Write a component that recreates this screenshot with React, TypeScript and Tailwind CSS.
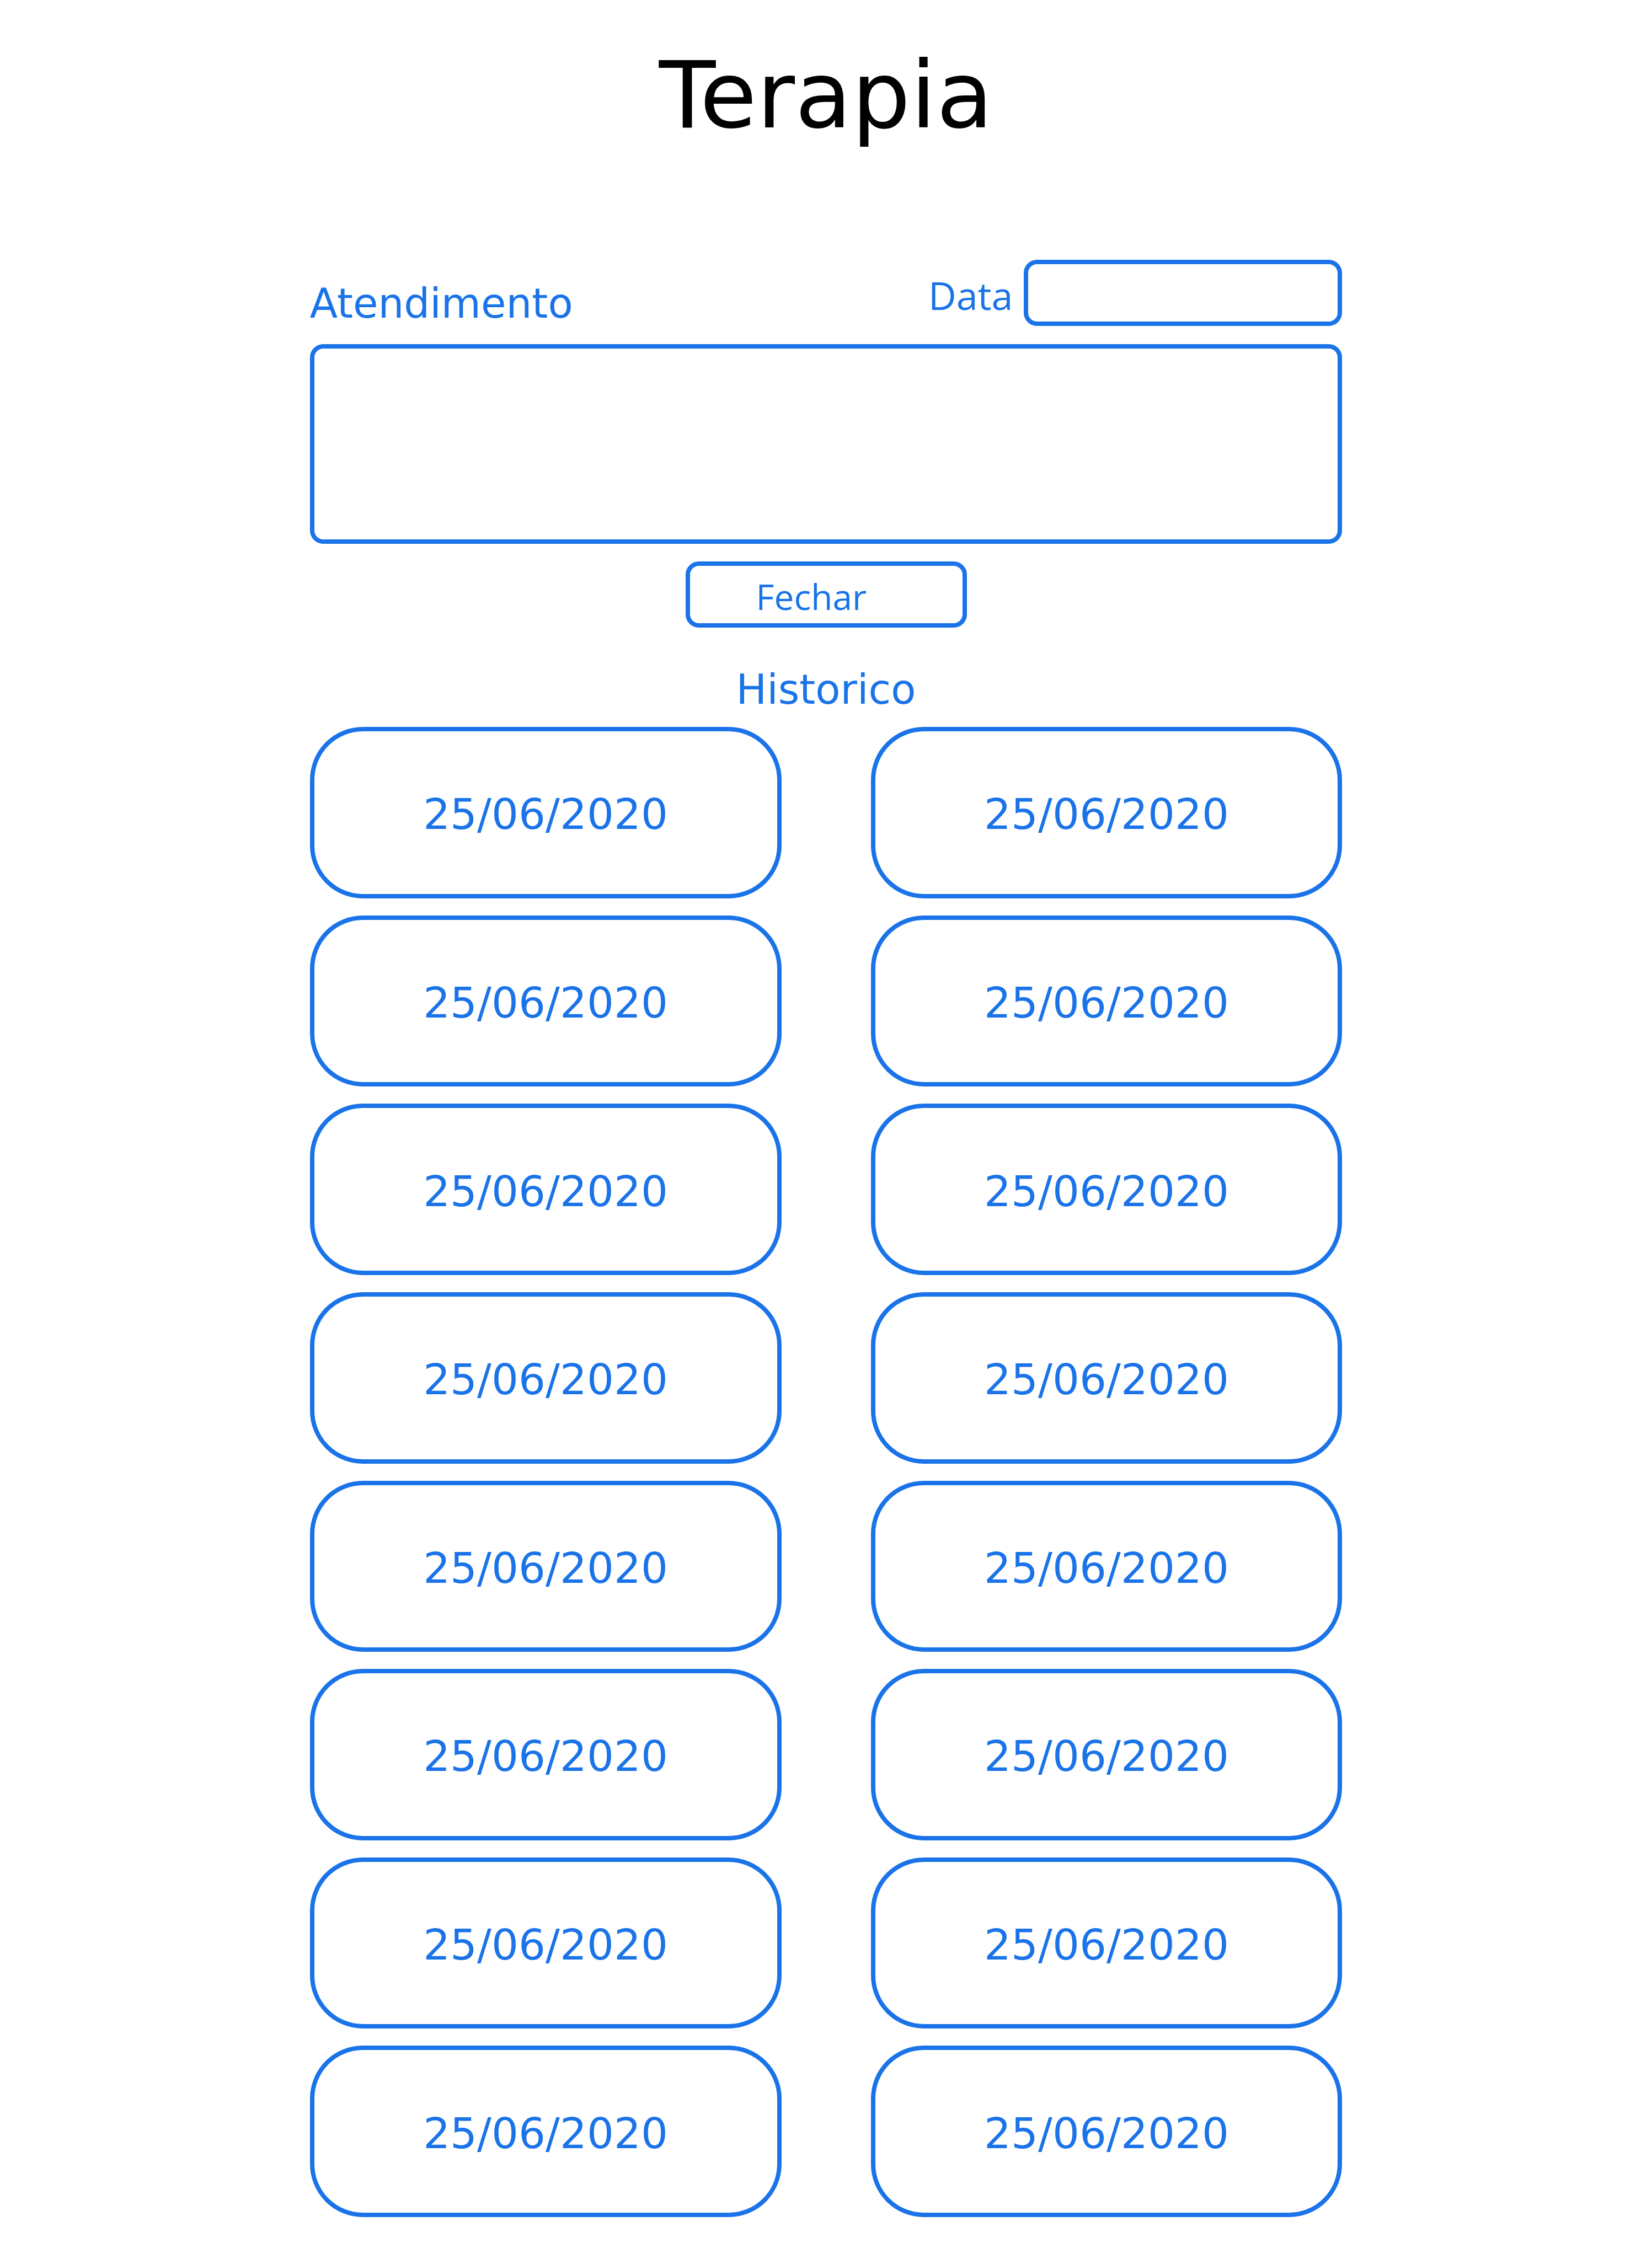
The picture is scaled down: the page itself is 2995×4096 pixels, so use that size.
const sessions: string[] = Array.from({ length: 16 }, () => "25/06/2020");

const fieldClass =
  "block rounded-3xl border-8 border-[#1a73e8] bg-white outline-none focus:ring-8 focus:ring-[#1a73e8]/20";

function SessionForm() {
  return (
    <form className="flex flex-col" onSubmit={(event) => event.preventDefault()}>
      <div className="flex items-end justify-between">
        <label htmlFor="atendimento" className="text-[74px] leading-[82px]">
          Atendimento
        </label>
        <div className="flex w-1/2 items-center justify-end gap-5">
          <label
            htmlFor="data"
            className="pt-2 font-['Open_Sans','Noto_Sans',sans-serif] text-[70px] leading-[96px]"
          >
            Data
          </label>
          <input
            id="data"
            type="text"
            className={`${fieldClass} h-[120px] w-[577px] px-6 text-[64px]`}
          />
        </div>
      </div>
      <textarea
        id="atendimento"
        className={`${fieldClass} mt-[33px] h-[362px] w-full resize-none p-6 text-[64px]`}
      />
      <button
        type="submit"
        className="mt-8 h-[120px] w-[510px] cursor-pointer self-center rounded-3xl border-8 border-[#1a73e8] pt-2 pl-[120px] text-left font-['Open_Sans','Noto_Sans',sans-serif] text-[64px] leading-[96px]"
      >
        Fechar
      </button>
    </form>
  );
}

function History() {
  return (
    <section className="mt-[68px] flex flex-1 flex-col" aria-labelledby="historico">
      <h2 id="historico" className="text-center text-[74px] leading-[88px]">
        Historico
      </h2>
      <ul className="mt-6 grid flex-1 auto-rows-fr grid-cols-2 gap-x-[162px] gap-y-[31px]">
        {sessions.map((date, index) => (
          <li key={index} className="flex">
            <button
              type="button"
              className="flex w-full cursor-pointer items-center justify-center rounded-[96px] border-8 border-[#1a73e8] pt-2 text-[77px] leading-[88px]"
            >
              {date}
            </button>
          </li>
        ))}
      </ul>
    </section>
  );
}

export default function App() {
  return (
    <main className="flex min-h-screen flex-col bg-white pt-[76px] pb-[76px] font-['Verdana','DejaVu_Sans',sans-serif] text-[#1a73e8]">
      <h1 className="text-center text-[168px] leading-[194px] text-black">Terapia</h1>
      <div className="mx-auto mt-[201px] flex w-[62.5%] flex-1 flex-col">
        <SessionForm />
        <History />
      </div>
    </main>
  );
}
